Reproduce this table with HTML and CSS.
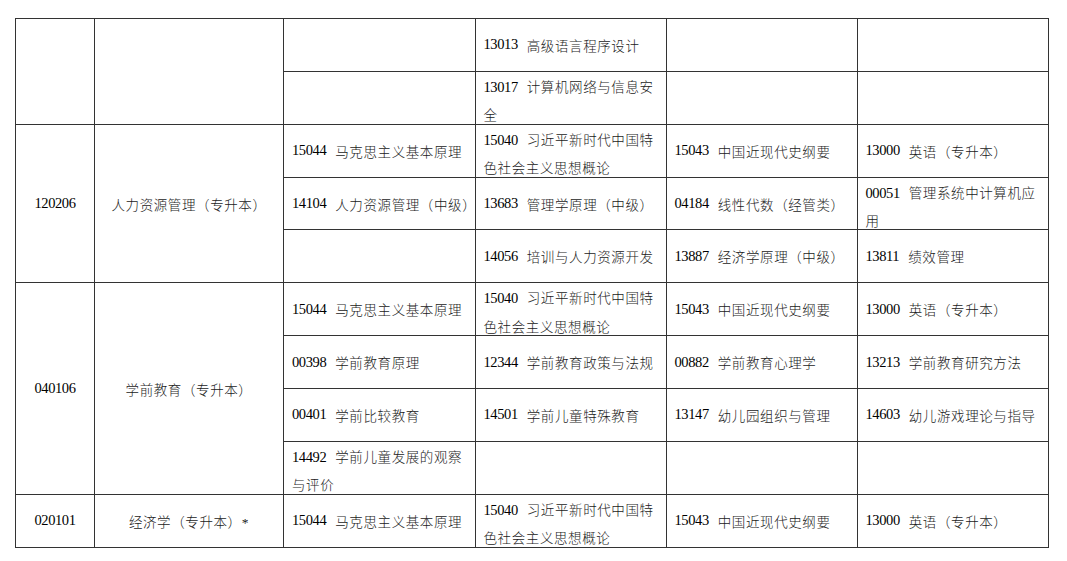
FILE: index.html
```html
<!DOCTYPE html>
<html lang="zh-CN">
<head>
<meta charset="utf-8">
<title>专升本课程表</title>
<link rel="stylesheet" href="styles.css">
</head>
<body>
<div class="table">
  <!-- group A -->
  <div class="cell c1 span2"></div>
  <div class="cell c2 span2"></div>
  <div class="cell"></div>
  <div class="cell"><span class="code">13013</span>高级语言程序设计</div>
  <div class="cell"></div>
  <div class="cell"></div>
  <div class="cell"></div>
  <div class="cell multi"><div><span class="code">13017</span>计算机网络与信息安<br>全</div></div>
  <div class="cell"></div>
  <div class="cell"></div>

  <!-- group B -->
  <div class="cell c1 span3"><span class="code">120206</span></div>
  <div class="cell c2 span3">人力资源管理（专升本）</div>
  <div class="cell"><span class="code">15044</span>马克思主义基本原理</div>
  <div class="cell multi"><div><span class="code">15040</span>习近平新时代中国特<br>色社会主义思想概论</div></div>
  <div class="cell"><span class="code">15043</span>中国近现代史纲要</div>
  <div class="cell"><span class="code">13000</span>英语（专升本）</div>
  <div class="cell"><span class="code">14104</span>人力资源管理（中级）</div>
  <div class="cell"><span class="code">13683</span>管理学原理（中级）</div>
  <div class="cell"><span class="code">04184</span>线性代数（经管类）</div>
  <div class="cell multi"><div><span class="code">00051</span>管理系统中计算机应<br>用</div></div>
  <div class="cell"></div>
  <div class="cell"><span class="code">14056</span>培训与人力资源开发</div>
  <div class="cell"><span class="code">13887</span>经济学原理（中级）</div>
  <div class="cell"><span class="code">13811</span>绩效管理</div>

  <!-- group C -->
  <div class="cell c1 span4"><span class="code">040106</span></div>
  <div class="cell c2 span4">学前教育（专升本）</div>
  <div class="cell"><span class="code">15044</span>马克思主义基本原理</div>
  <div class="cell multi"><div><span class="code">15040</span>习近平新时代中国特<br>色社会主义思想概论</div></div>
  <div class="cell"><span class="code">15043</span>中国近现代史纲要</div>
  <div class="cell"><span class="code">13000</span>英语（专升本）</div>
  <div class="cell"><span class="code">00398</span>学前教育原理</div>
  <div class="cell"><span class="code">12344</span>学前教育政策与法规</div>
  <div class="cell"><span class="code">00882</span>学前教育心理学</div>
  <div class="cell"><span class="code">13213</span>学前教育研究方法</div>
  <div class="cell"><span class="code">00401</span>学前比较教育</div>
  <div class="cell"><span class="code">14501</span>学前儿童特殊教育</div>
  <div class="cell"><span class="code">13147</span>幼儿园组织与管理</div>
  <div class="cell"><span class="code">14603</span>幼儿游戏理论与指导</div>
  <div class="cell multi"><div><span class="code">14492</span>学前儿童发展的观察<br>与评价</div></div>
  <div class="cell"></div>
  <div class="cell"></div>
  <div class="cell"></div>

  <!-- group D -->
  <div class="cell c1"><span class="code">020101</span></div>
  <div class="cell c2">经济学（专升本）*</div>
  <div class="cell"><span class="code">15044</span>马克思主义基本原理</div>
  <div class="cell multi"><div><span class="code">15040</span>习近平新时代中国特<br>色社会主义思想概论</div></div>
  <div class="cell"><span class="code">15043</span>中国近现代史纲要</div>
  <div class="cell"><span class="code">13000</span>英语（专升本）</div>
</div>
</body>
</html>
```

FILE: styles.css
```css
html, body {
  margin: 0;
  padding: 0;
  background: #fff;
}

.table {
  display: grid;
  grid-template-columns: 79px 189px 191.5px 191px 191px 191.5px;
  grid-template-rows: repeat(10, 52.87px);
  width: max-content;
  margin: 18px 0 0 15px;
  border-top: 1px solid #333;
  border-left: 1px solid #333;
  font-family: "Liberation Serif", "Noto Sans CJK SC", serif;
  font-size: 13.5px;
  font-weight: 300;
  color: #1a1a1a;
  letter-spacing: 0.6px;
}

.cell {
  box-sizing: border-box;
  border-right: 1px solid #333;
  border-bottom: 1px solid #333;
  display: flex;
  align-items: center;
  padding: 0 4px 0 8px;
  white-space: nowrap;
  min-width: 0;
}

.cell.multi {
  align-items: flex-start;
  padding-top: 1px;
  line-height: 28.5px;
}

.cell.multi > div {
  height: 28.5px;
}

.code {
  font-size: 14.5px;
  font-weight: 400;
  letter-spacing: -0.4px;
  margin-right: 9px;
  color: #000;
}

.c1, .c2 {
  justify-content: center;
  padding: 0;
}

.c1 {
  grid-column: 1;
}

.c1 .code {
  margin-right: 0;
}

.c2 {
  grid-column: 2;
}

.span2 { grid-row: span 2; }
.span3 { grid-row: span 3; }
.span4 { grid-row: span 4; }
```
